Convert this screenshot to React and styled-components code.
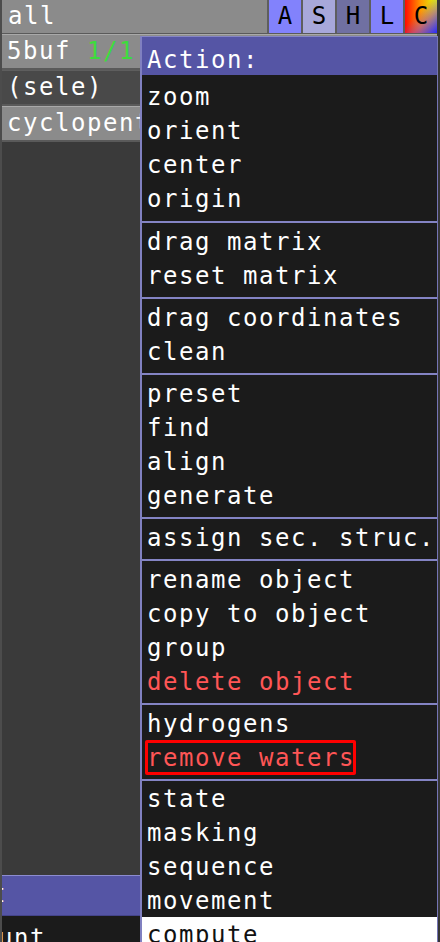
import React from "react";
import styled, { createGlobalStyle } from "styled-components";

const Global = createGlobalStyle`
  html, body { margin: 0; padding: 0; background: #3a3a3a; }
  * { box-sizing: border-box; }
`;

const Page = styled.div`
  position: relative;
  width: 440px;
  height: 942px;
  overflow: hidden;
  background: #363636;
  font-family: "DejaVu Sans Mono", "Liberation Mono", monospace;
  font-size: 24px;
  letter-spacing: 1.55px;
  color: #fff;
`;

const Panel = styled.div`
  width: 437px;
  height: 100%;
  display: flex;
  flex-direction: column;
  background: #3a3a3a;
  border-left: 2px solid #4c4c4c;
`;

const TopRow = styled.div`
  display: flex;
  height: 34px;
  gap: 2px;
  background: #5e5e5e;
  border-bottom: 1px solid #5a5a5a;
`;

const NameCell = styled.div`
  flex: 1;
  background: #8b8b8b;
  line-height: 32px;
  padding-left: 6px;
  white-space: nowrap;
`;

const ToggleButton = styled.div`
  width: 32px;
  height: 33px;
  background: ${(p) => p.$bg};
  color: #000;
  line-height: 32px;
  text-align: center;
  letter-spacing: 0;
`;

const ColorButton = styled(ToggleButton)`
  background: linear-gradient(135deg, rgba(60, 40, 255, 0) 40%, rgba(150, 60, 200, 0.55) 65%, rgba(40, 40, 255, 1) 100%),
    linear-gradient(to right, #ff0a00 0%, #ff9a00 50%, #d8ff10 100%);
`;

const ObjRow = styled.div`
  height: 36px;
  line-height: 33px;
  padding-left: 5px;
  white-space: nowrap;
  overflow: hidden;
  background: ${(p) => (p.$dark ? "#494949" : "#8b8b8b")};
  border-top: 1px solid ${(p) => (p.$dark ? "#5e5e5e" : "#a9a9a9")};
  border-bottom: 2px solid #5a5a5a;
`;

const Green = styled.span`
  color: #3cdc3c;
`;

const Filler = styled.div`
  flex: 1;
  background: #3a3a3a;
`;

const BlueBar = styled.div`
  height: 41px;
  background: #5555a5;
  border-top: 1px solid #8c8cd0;
  border-bottom: 1px solid #44448a;
  line-height: 36px;
  white-space: nowrap;
  overflow: hidden;
`;

const BottomRow = styled.div`
  height: 26px;
  background: #1b1b1b;
  line-height: 44px;
  white-space: nowrap;
  overflow: hidden;
`;

const Clip = styled.span`
  display: inline-block;
  margin-left: ${(p) => p.$shift}px;
`;

const Menu = styled.div`
  position: absolute;
  top: 36px;
  left: 140px;
  width: 298px;
  bottom: 0;
  display: flex;
  flex-direction: column;
  background: #1b1b1b;
  border-top: 1px solid #8484c4;
  border-left: 2px solid #8080c0;
  border-right: 1px solid #7474b4;
`;

const MenuHeader = styled.div`
  height: 38px;
  padding: 7px 0 0 5px;
  line-height: 32px;
  background: #5555a5;
  white-space: nowrap;
`;

const Group = styled.div`
  padding: ${(p) => p.$pad};
  border-top: ${(p) => (p.$first ? "none" : "2px solid #8484c4")};
`;

const Item = styled.div`
  height: 34px;
  line-height: 36px;
  padding-left: 5px;
  white-space: nowrap;
  color: ${(p) => (p.$active ? "#111" : p.$danger ? "#ff5656" : "#ffffff")};
  background: ${(p) => (p.$active ? "#ffffff" : "transparent")};
`;

const Marked = styled.span`
  display: inline-block;
  height: 35px;
  margin-left: -2px;
  padding: 0 1px 0 2px;
  border-radius: 2px;
  box-shadow: inset 0 0 0 3px #ff0000;
`;

const groups = [
  [{ t: "zoom" }, { t: "orient" }, { t: "center" }, { t: "origin" }],
  [{ t: "drag matrix" }, { t: "reset matrix" }],
  [{ t: "drag coordinates" }, { t: "clean" }],
  [{ t: "preset" }, { t: "find" }, { t: "align" }, { t: "generate" }],
  [{ t: "assign sec. struc." }],
  [
    { t: "rename object" },
    { t: "copy to object" },
    { t: "group" },
    { t: "delete object", danger: true },
  ],
  [{ t: "hydrogens" }, { t: "remove waters", danger: true, marked: true }],
  [
    { t: "state" },
    { t: "masking" },
    { t: "sequence" },
    { t: "movement" },
    { t: "compute", active: true },
  ],
];

const padFor = (gi) => {
  if (gi === 0) return "4px 0 6px";
  if (gi === groups.length - 1) return "0";
  return "1px 0 5px";
};

export default function App() {
  return (
    <>
      <Global />
      <Page>
        <Panel>
          <TopRow>
            <NameCell>all</NameCell>
            <ToggleButton $bg="#8282fc">A</ToggleButton>
            <ToggleButton $bg="#a8a8da">S</ToggleButton>
            <ToggleButton $bg="#7070a2">H</ToggleButton>
            <ToggleButton $bg="#8282fc">L</ToggleButton>
            <ColorButton>C</ColorButton>
          </TopRow>
          <ObjRow>
            5buf <Green>1/1</Green>
          </ObjRow>
          <ObjRow $dark>(sele)</ObjRow>
          <ObjRow>cyclopentane</ObjRow>
          <Filler />
          <BlueBar>
            <Clip $shift={-11}>t</Clip>
          </BlueBar>
          <BottomRow>
            <Clip $shift={-4}>unt</Clip>
          </BottomRow>
        </Panel>
        <Menu>
          <MenuHeader>Action:</MenuHeader>
          {groups.map((g, gi) => (
            <Group key={gi} $first={gi === 0} $pad={padFor(gi)}>
              {g.map((it) => (
                <Item key={it.t} $danger={it.danger} $active={it.active}>
                  {it.marked ? <Marked>{it.t}</Marked> : it.t}
                </Item>
              ))}
            </Group>
          ))}
        </Menu>
      </Page>
    </>
  );
}
